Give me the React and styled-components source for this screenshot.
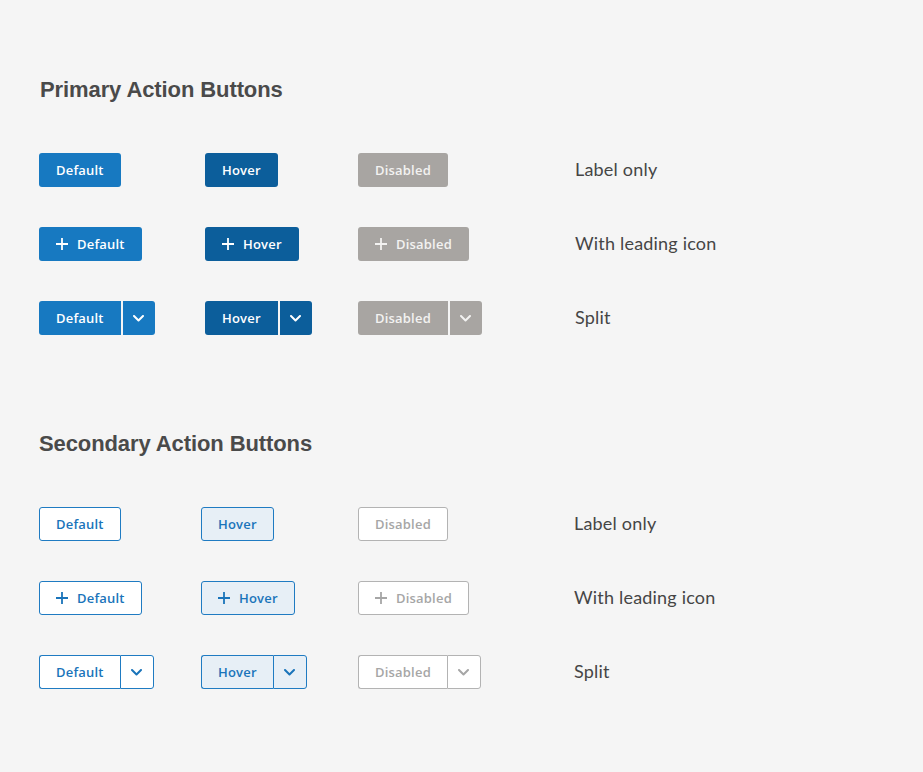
import React from "react";
import styled, { createGlobalStyle, css } from "styled-components";

const GlobalStyle = createGlobalStyle`
  html, body {
    margin: 0;
    padding: 0;
    background: #f5f5f5;
  }
`;

const palette = {
  primary: {
    default: { bg: "#1779c1", fg: "#ffffff", border: "#1779c1" },
    hover: { bg: "#0c5e9b", fg: "#ffffff", border: "#0c5e9b" },
    disabled: { bg: "#a8a5a2", fg: "#f3f2f1", border: "#a8a5a2" },
  },
  secondary: {
    default: { bg: "#ffffff", fg: "#1a74ba", border: "#1f7bc2" },
    hover: { bg: "#e7eff6", fg: "#1a74ba", border: "#1f7bc2" },
    disabled: { bg: "#ffffff", fg: "#a6a6a6", border: "#b3b3b3" },
  },
};

const Page = styled.div`
  width: 923px;
  min-height: 772px;
  box-sizing: border-box;
  padding: 76px 0 0 39px;
  display: flex;
  flex-direction: column;
  gap: 95px;
`;

const Section = styled.section`
  display: flex;
  flex-direction: column;
  gap: 51px;
`;

const Heading = styled.h2`
  margin: 1px 0 -1px ${(p) => p.$indent}px;
  font-family: "Liberation Sans", Arial, sans-serif;
  font-weight: 700;
  font-size: 22px;
  line-height: 26px;
  letter-spacing: -0.1px;
  color: #4a4a4a;
`;

const Rows = styled.div`
  display: flex;
  flex-direction: column;
  gap: 40px;
`;

const Row = styled.div`
  display: grid;
  grid-template-columns: ${(p) => p.$cols};
  align-items: center;
  height: 34px;
`;

const Label = styled.span`
  font-family: Lato, "Open Sans", sans-serif;
  font-size: 18px;
  color: #454545;
  letter-spacing: 0.2px;
  margin-top: -2px;
`;

const Cell = styled.div`
  display: flex;
  align-items: center;
`;

const baseBtn = css`
  box-sizing: border-box;
  height: 34px;
  display: inline-flex;
  align-items: center;
  justify-content: center;
  gap: 9px;
  font-family: "Open Sans", sans-serif;
  font-weight: 600;
  font-size: 13px;
  letter-spacing: 0.2px;
  cursor: pointer;
  background: ${(p) => palette[p.$variant][p.$state].bg};
  color: ${(p) => palette[p.$variant][p.$state].fg};
  border: ${(p) =>
    p.$variant === "secondary"
      ? `1.5px solid ${palette[p.$variant][p.$state].border}`
      : "none"};
  svg {
    flex: none;
  }
`;

const Button = styled.button`
  ${baseBtn}
  border-radius: 3px;
  padding: 0 ${(p) => (p.$variant === "secondary" ? 16 : 17)}px;
`;

const SplitWrap = styled.div`
  display: inline-flex;
  gap: ${(p) => (p.$variant === "secondary" ? 0 : 2)}px;
`;

const SplitMain = styled.button`
  ${baseBtn}
  border-radius: 3px 0 0 3px;
  padding: 0 ${(p) => (p.$variant === "secondary" ? 16 : 17)}px;
  ${(p) => p.$variant === "secondary" && "border-right: none;"}
`;

const SplitToggle = styled.button`
  ${baseBtn}
  width: ${(p) => (p.$variant === "secondary" ? 34 : 32)}px;
  padding: 0;
  border-radius: 0 3px 3px 0;
`;

const Plus = () => (
  <svg width="12" height="12" viewBox="0 0 12 12">
    <path d="M6 0v12M0 6h12" stroke="currentColor" strokeWidth="1.8" fill="none" />
  </svg>
);

const Chevron = () => (
  <svg width="11" height="7" viewBox="0 0 11 7">
    <path
      d="M1 1l4.5 4.5L10 1"
      stroke="currentColor"
      strokeWidth="2"
      fill="none"
      strokeLinecap="round"
      strokeLinejoin="round"
    />
  </svg>
);

const states = [
  { key: "default", text: "Default" },
  { key: "hover", text: "Hover" },
  { key: "disabled", text: "Disabled" },
];

const kinds = [
  { key: "label", label: "Label only" },
  { key: "icon", label: "With leading icon" },
  { key: "split", label: "Split" },
];

const renderButton = (variant, kind, s) => {
  if (kind === "split") {
    return (
      <SplitWrap $variant={variant}>
        <SplitMain $variant={variant} $state={s.key}>
          {s.text}
        </SplitMain>
        <SplitToggle $variant={variant} $state={s.key} aria-label="More">
          <Chevron />
        </SplitToggle>
      </SplitWrap>
    );
  }
  return (
    <Button $variant={variant} $state={s.key}>
      {kind === "icon" && <Plus />}
      {s.text}
    </Button>
  );
};

const ButtonGroup = ({ title, variant, cols, indent }) => (
  <Section>
    <Heading $indent={indent}>{title}</Heading>
    <Rows>
      {kinds.map((k) => (
        <Row key={k.key} $cols={cols}>
          {states.map((s) => (
            <Cell key={s.key}>{renderButton(variant, k.key, s)}</Cell>
          ))}
          <Label>{k.label}</Label>
        </Row>
      ))}
    </Rows>
  </Section>
);

export default function App() {
  return (
    <>
      <GlobalStyle />
      <Page>
        <ButtonGroup
          title="Primary Action Buttons"
          variant="primary"
          cols="166px 153px 217px 1fr"
          indent={1}
        />
        <ButtonGroup
          title="Secondary Action Buttons"
          variant="secondary"
          cols="162px 157px 216px 1fr"
          indent={0}
        />
      </Page>
    </>
  );
}
